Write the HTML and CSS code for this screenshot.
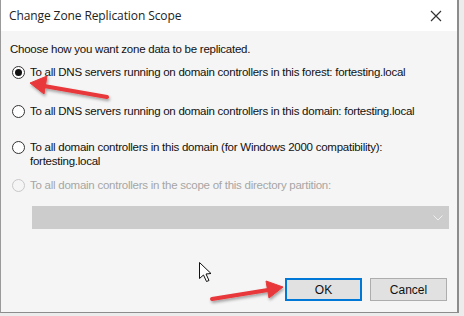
FILE: index.html
```html
<!DOCTYPE html>
<html lang="en">
<head>
  <meta charset="UTF-8" />
  <title>Change Zone Replication Scope</title>
  <link rel="stylesheet" href="styles.css">
</head>
<body>

<div class="dialog">
  <div class="titlebar">
    <span class="title">Change Zone Replication Scope</span>
    <span class="close">
      <svg width="12" height="12" viewBox="0 0 12 12"><path d="M1 1L11 11M11 1L1 11" stroke="#333" stroke-width="1.2"/></svg>
    </span>
  </div>

  <div class="content">
    <p class="intro">Choose how you want zone data to be replicated.</p>

    <div class="options">
      <label class="option opt-1">
        <span class="radio checked"></span>
        <span>To all DNS servers running on domain controllers in this forest: fortesting.local</span>
      </label>
      <label class="option opt-2">
        <span class="radio"></span>
        <span>To all DNS servers running on domain controllers in this domain: fortesting.local</span>
      </label>
      <label class="option opt-3">
        <span class="radio"></span>
        <span>To all domain controllers in this domain (for Windows 2000 compatibility):<br>fortesting.local</span>
      </label>
      <label class="option opt-4 disabled">
        <span class="radio"></span>
        <span>To all domain controllers in the scope of this directory partition:</span>
      </label>
      <div class="combo">
        <svg width="10" height="6" viewBox="0 0 10 6"><path d="M0.5 0.5L5 5L9.5 0.5" fill="none" stroke="#eee" stroke-width="1"/></svg>
      </div>
    </div>

    <div class="buttons">
      <button class="btn btn-default">OK</button>
      <button class="btn">Cancel</button>
    </div>
  </div>

  <!-- annotations drawn over the screenshot -->
  <svg class="overlay" width="464" height="316" viewBox="0 0 464 316">
    <defs>
      <filter id="shadow" x="-20%" y="-50%" width="140%" height="200%">
        <feDropShadow dx="1" dy="2" stdDeviation="1.5" flood-color="#000" flood-opacity="0.35"/>
      </filter>
    </defs>
    <g filter="url(#shadow)" fill="#e8383a" stroke="#e8383a">
      <line x1="107" y1="97" x2="44" y2="86" stroke-width="4" stroke-linecap="round"/>
      <polygon points="30,83 47,76 44,94" stroke-width="1" stroke-linejoin="round"/>
      <line x1="212" y1="299" x2="268" y2="290" stroke-width="4" stroke-linecap="round"/>
      <polygon points="283,287 266,281 269,298" stroke-width="1" stroke-linejoin="round"/>
    </g>
    <path d="M199.5 262.5 L199.5 278.5 L203.5 275 L206.5 281.5 L209 280.5 L206 274 L211 273.5 Z" fill="#fff" stroke="#111" stroke-width="1" stroke-linejoin="round"/>
  </svg>
</div>

</body>
</html>
```

FILE: styles.css
```css
body {
  margin: 0;
  background: #ececec;
  font-family: 'Liberation Sans', Arial, sans-serif;
  color: #111;
}
.dialog {
  position: relative;
  width: 456px;
  height: 312px;
  background: #f5f5f5;
  border-left: 1px solid #9a9a9a;
  border-right: 2px solid #8c8c8c;
  border-bottom: 1px solid #8c8c8c;
  display: flex;
  flex-direction: column;
}
.titlebar {
  height: 31px;
  background: #fff;
  display: flex;
  align-items: center;
  justify-content: space-between;
  padding: 0 9px 0 8px;
}
.title {
  font-family: 'Open Sans', sans-serif;
  font-size: 12px;
  letter-spacing: -0.1px;
  color: #222;
}
.close {
  display: flex;
  width: 24px;
  justify-content: center;
}
.content {
  flex: 1;
  display: flex;
  flex-direction: column;
  padding: 12px 10px 10px 9px;
  font-size: 11.5px;
  letter-spacing: -0.25px;
}
.intro {
  margin: 0 0 10px;
}
.options {
  display: flex;
  flex-direction: column;
  padding-left: 2px;
}
.option {
  display: flex;
  align-items: flex-start;
  gap: 5px;
  line-height: 14px;
  white-space: nowrap;
}
.opt-2 { margin-top: 25px; }
.opt-3 { margin-top: 22px; }
.opt-4 { margin-top: 10px; }
.radio {
  width: 11px;
  height: 11px;
  border: 1px solid #333;
  border-radius: 50%;
  background: #fff;
  flex: none;
  display: flex;
  align-items: center;
  justify-content: center;
  margin-top: 1px;
}
.radio.checked::after {
  content: '';
  width: 7px;
  height: 7px;
  border-radius: 50%;
  background: #111;
}
.disabled {
  color: #a6a6a6;
}
.disabled .radio {
  border-color: #c8c8c8;
  background: #f5f5f5;
}
.combo {
  margin: 14px 0 0 20px;
  width: 417px;
  height: 23px;
  background: #cccccc;
  display: flex;
  align-items: center;
  justify-content: flex-end;
  padding-right: 6px;
  box-sizing: border-box;
}
.buttons {
  margin-top: auto;
  display: flex;
  justify-content: flex-end;
  gap: 8px;
  margin-bottom: 1px;
}
.btn {
  width: 77px;
  height: 23px;
  font-family: 'Liberation Sans', Arial, sans-serif;
  font-size: 12px;
  color: #111;
  background: #e1e1e1;
  border: 1px solid #adadad;
  padding: 0;
}
.btn-default {
  border: 2px solid #0078d7;
}
.overlay {
  position: absolute;
  left: -1px;
  top: 0;
  pointer-events: none;
}
```
